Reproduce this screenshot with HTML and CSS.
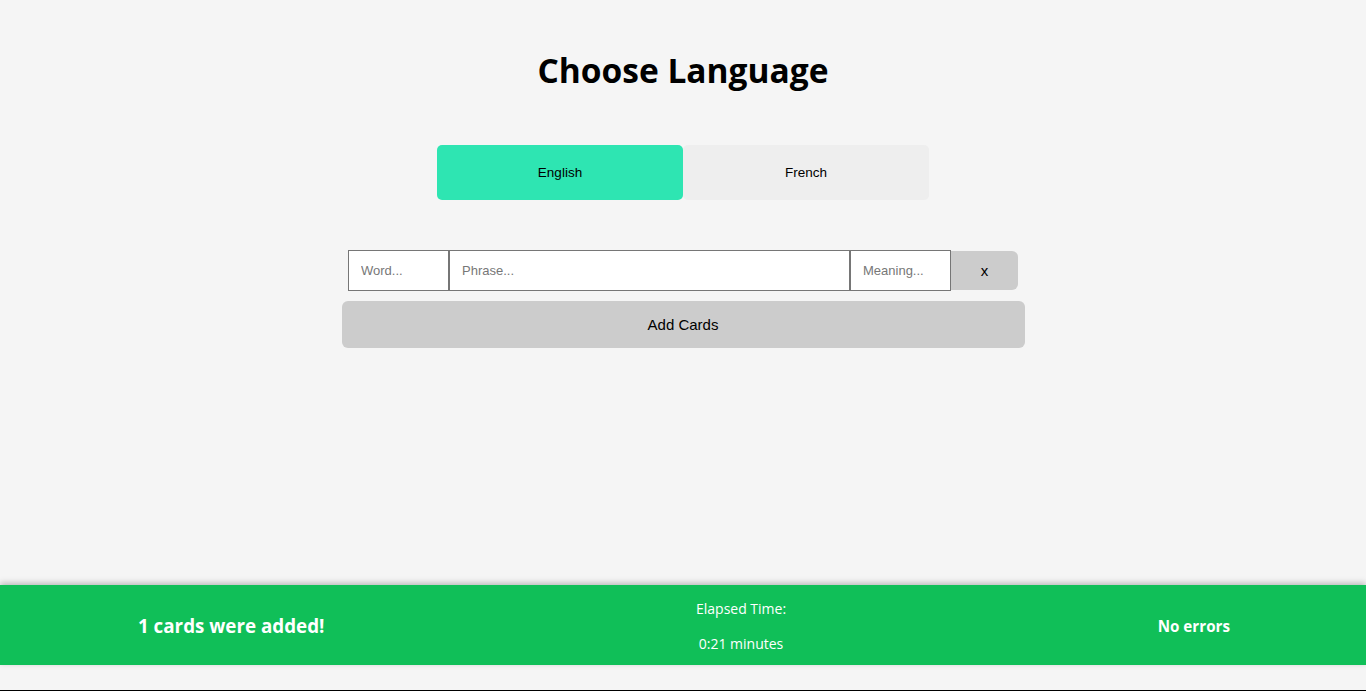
FILE: index.html
```html
<!DOCTYPE html>
<html lang="en">
<head>
<meta charset="utf-8">
<title>Choose Language</title>
<link rel="stylesheet" href="styles.css">
</head>
<body>
<main class="main">
  <h1 class="title">Choose Language</h1>
  <div class="tabs">
    <button class="tab tab-active">English</button>
    <button class="tab">French</button>
  </div>
  <div class="card-row">
    <input class="field field-word" type="text" placeholder="Word...">
    <input class="field field-phrase" type="text" placeholder="Phrase...">
    <input class="field field-meaning" type="text" placeholder="Meaning...">
    <button class="remove-btn">x</button>
  </div>
  <button class="add-btn">Add Cards</button>
</main>
<footer class="status">
  <div class="status-left">1 cards were added!</div>
  <div class="status-mid">
    <p class="status-line">Elapsed Time:</p>
    <p class="status-line">0:21 minutes</p>
  </div>
  <div class="status-right">No errors</div>
</footer>
<div class="bottom-gap"></div>
</body>
</html>
```

FILE: styles.css
```css
html, body {
  margin: 0;
  padding: 0;
}
body {
  background: #f5f5f5;
  min-height: 100vh;
  display: flex;
  flex-direction: column;
  font-family: "Liberation Sans", Arial, sans-serif;
}
.main {
  flex: 1;
  display: flex;
  flex-direction: column;
  align-items: center;
}
.title {
  margin: 47px 0 0;
  font-family: "Open Sans", "Noto Sans", sans-serif;
  font-weight: 700;
  font-size: 33.5px;
  line-height: 46px;
  color: #000;
}
.tabs {
  margin-top: 52px;
  display: flex;
  width: 492px;
}
.tab {
  flex: 1;
  height: 55px;
  border: none;
  background: #eeeeee;
  font-family: "Liberation Sans", Arial, sans-serif;
  font-size: 13.5px;
  color: #000;
  border-radius: 5px;
  padding: 0;
}
.tab-active {
  background: #2ee5b2;
}
.card-row {
  margin-top: 50px;
  display: flex;
  align-items: center;
}
.field {
  box-sizing: border-box;
  height: 41px;
  border: 1px solid #767676;
  background: #fff;
  padding: 0 12px;
  font-family: "Liberation Sans", Arial, sans-serif;
  font-size: 13px;
  color: #000;
  margin: 0;
}
.field::placeholder {
  color: #777;
}
.field-word, .field-meaning {
  width: 101px;
}
.field-phrase {
  width: 401px;
}
.remove-btn {
  width: 67px;
  height: 39px;
  border: none;
  background: #cccccc;
  border-radius: 0 6px 6px 0;
  font-family: "Liberation Sans", Arial, sans-serif;
  font-size: 15px;
  color: #000;
  padding: 0;
}
.add-btn {
  margin-top: 10px;
  width: 683px;
  height: 47px;
  border: none;
  background: #cccccc;
  border-radius: 6px;
  font-family: "Liberation Sans", Arial, sans-serif;
  font-size: 15px;
  color: #000;
  padding: 0;
}
.status {
  height: 80px;
  background: #10bf58;
  box-shadow: 0 -2px 6px rgba(0, 0, 0, 0.25);
  display: flex;
  align-items: center;
  justify-content: space-between;
  padding: 0 136px 0 138px;
  color: #fff;
  font-family: "Open Sans", "Noto Sans", sans-serif;
}
.status-left {
  font-weight: 700;
  font-size: 18.8px;
  padding-top: 2px;
}
.status-mid {
  display: flex;
  flex-direction: column;
  align-items: center;
  gap: 16px;
  padding-top: 2px;
}
.status-line {
  margin: 0;
  font-size: 14px;
  line-height: 19px;
}
.status-right {
  font-weight: 700;
  font-size: 15.2px;
  padding-top: 2px;
}
.bottom-gap {
  height: 25px;
  border-bottom: 1px solid #000;
}
```
